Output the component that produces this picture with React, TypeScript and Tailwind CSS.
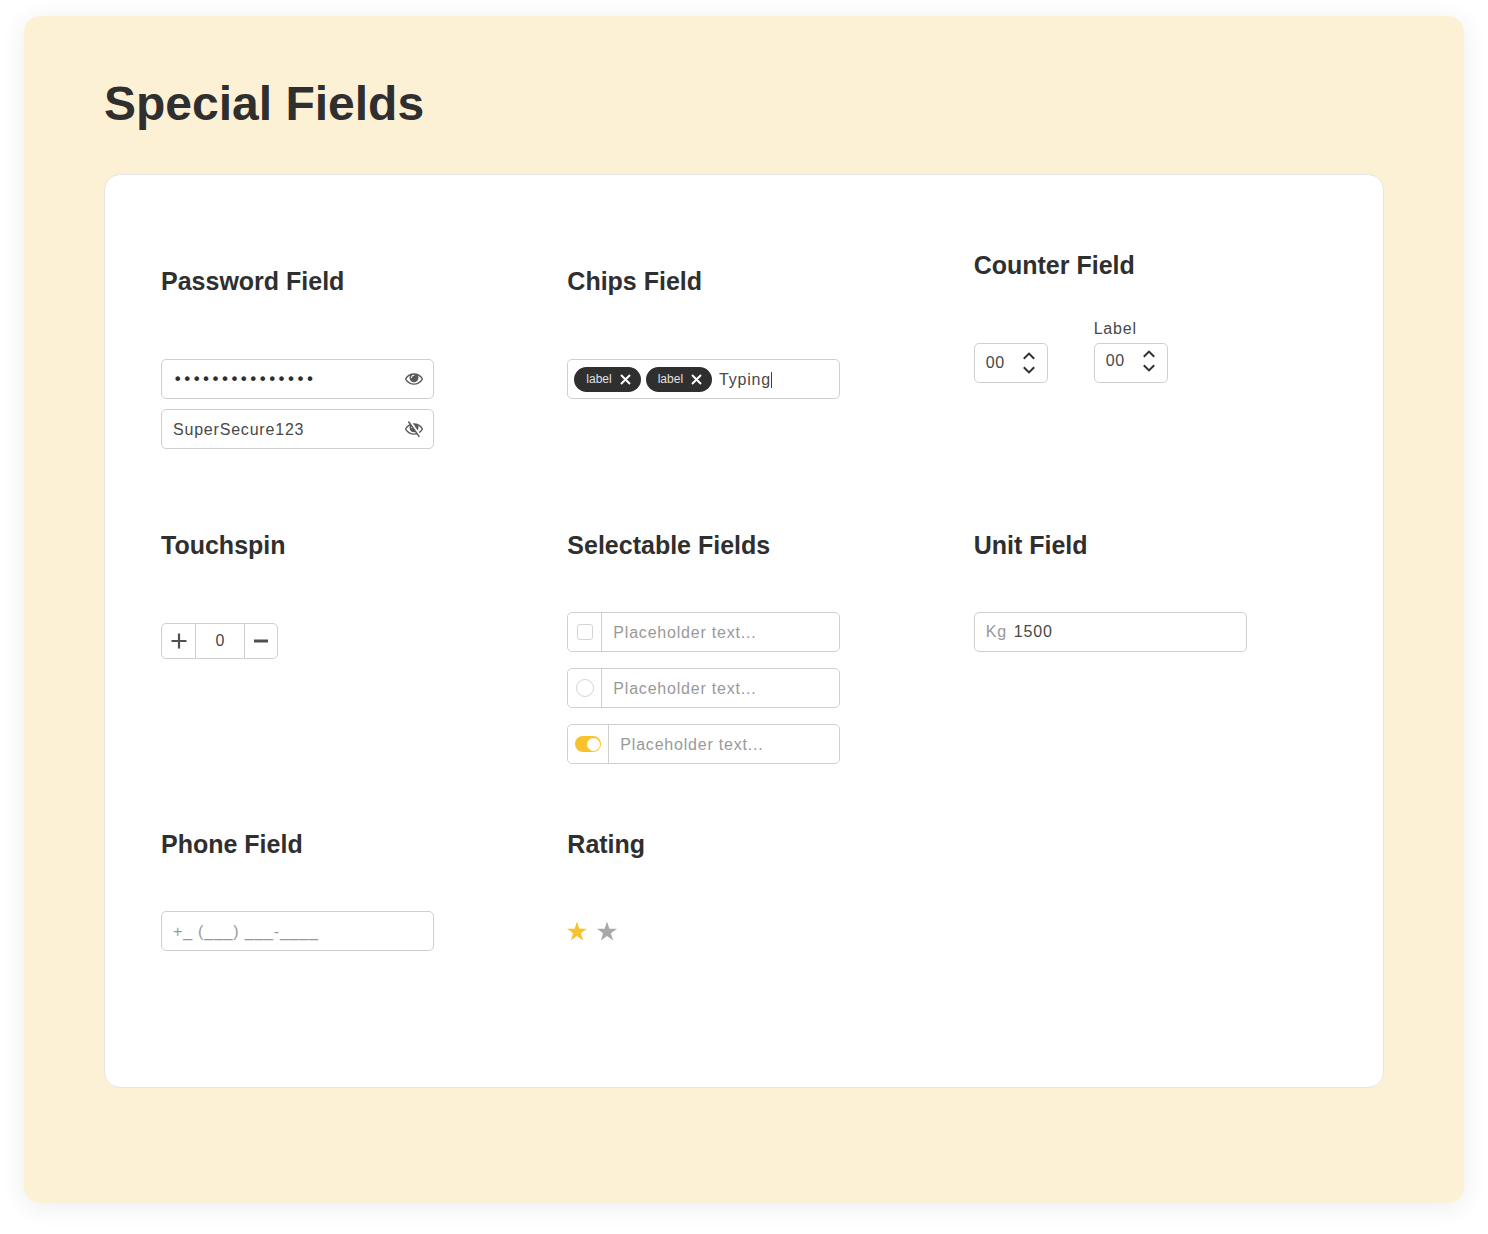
import { useState, type ReactNode } from 'react';
import { clsx } from 'clsx';

const FIELD = 'flex h-10 w-[273px] items-center rounded-[5px] border border-[#cfcfcf] bg-white';
const INPUT = 'w-full min-w-0 flex-1 bg-transparent tracking-wider text-[#484848] outline-none placeholder:text-[#999]';

const EYE_PATH =
  'M1664 960q-152-236-381-353 61 104 61 225 0 185-131.500 316.500t-316.500 131.500-316.500-131.500-131.500-316.500q0-121 61-225-229 117-381 353 133 205 333.500 326.500t434.500 121.500 434.500-121.500 333.500-326.500zM944 576q0-20-14-34t-34-14q-125 0-214.500 89.500t-89.500 214.500q0 20 14 34t34 14 34-14 14-34q0-86 61-147t147-61q20 0 34-14t14-34zM1792 960q0 34-20 69-140 230-376.500 368.500t-499.500 138.500-499.500-139-376.500-368q-20-35-20-69t20-69q140-229 376.500-368t499.500-139 499.500 139 376.500 368q20 35 20 69z';

function EyeIcon({ off }: { off?: boolean }) {
  return (
    <svg viewBox="0 0 1792 1920" className="block h-5 w-[18px]" fill="#5a5a5a">
      <path d={EYE_PATH} />
      {off && (
        <>
          <path d="M470 190L1560 1720" stroke="#fff" strokeWidth="230" />
          <path d="M340 210L1430 1740" stroke="#5a5a5a" strokeWidth="150" />
        </>
      )}
    </svg>
  );
}

function Section({ title, spacious, children }: { title: string; spacious?: boolean; children: ReactNode }) {
  return (
    <section>
      <h2 className="text-[25px] leading-8 font-bold text-[#2f2f2f]">{title}</h2>
      <div className={spacious ? 'mt-[62px]' : 'mt-[51px]'}>{children}</div>
    </section>
  );
}

function PasswordField({ initial, label, visible }: { initial: string; label: string; visible?: boolean }) {
  const [value, setValue] = useState(initial);
  const [shown, setShown] = useState(!!visible);

  return (
    <div className={clsx(FIELD, 'pr-[10px] pl-[11px]')}>
      <input
        type={shown ? 'text' : 'password'}
        aria-label={label}
        value={value}
        onChange={(e) => setValue(e.target.value)}
        className={clsx(INPUT, 'pt-0.5', !shown && 'font-["DejaVu_Sans",sans-serif] tracking-normal! text-[#2f2f2f]!')}
      />
      <button type="button" aria-label={shown ? 'Hide password' : 'Show password'} onClick={() => setShown(!shown)}>
        <EyeIcon off={shown} />
      </button>
    </div>
  );
}

function ChipsField() {
  const [chips, setChips] = useState(['label', 'label']);
  const [text, setText] = useState('Typing');

  return (
    <div className={clsx(FIELD, 'gap-[5px] px-[6px]')}>
      {chips.map((chip, i) => (
        <span key={i} className="flex h-[25px] items-center gap-2 rounded-full bg-[#2f2f2f] pr-[10px] pl-3 text-xs text-[#e0e0e0]">
          {chip}
          <button type="button" aria-label={`Remove ${chip}`} onClick={() => setChips(chips.filter((_, n) => n !== i))}>
            <svg viewBox="0 0 11 11" className="block size-[11px]" fill="none" stroke="#fff" strokeWidth="2">
              <path d="M1 1l9 9M10 1l-9 9" />
            </svg>
          </button>
        </span>
      ))}
      <div className="flex items-center pt-0.5 pl-0.5">
        <input
          aria-label="Add chip"
          value={text}
          onChange={(e) => setText(e.target.value)}
          className="[field-sizing:content] bg-transparent tracking-wider text-[#484848] caret-transparent outline-none"
        />
        <span className="h-4 w-px bg-[#3d3d3d]" />
      </div>
    </div>
  );
}

function Counter({ label }: { label?: string }) {
  const [value, setValue] = useState(0);
  const id = label ? 'counter-labelled' : 'counter-plain';

  return (
    <div className="flex flex-col gap-[2px]">
      {label && (
        <label htmlFor={id} className="leading-6 tracking-wider text-[#484848]">
          {label}
        </label>
      )}
      <div className={clsx('flex h-10 w-[74px] items-center rounded-[5px] border border-[#cfcfcf] pr-3 pl-[11px]', label && 'pb-1')}>
        <input
          id={id}
          aria-label={label ? undefined : 'Counter'}
          inputMode="numeric"
          value={String(value).padStart(2, '0')}
          onChange={(e) => setValue(Number(e.target.value) || 0)}
          className={INPUT}
        />
        <div className="flex flex-col gap-[6px]">
          <button type="button" aria-label="Increase" onClick={() => setValue(value + 1)}>
            <svg viewBox="0 0 12 8" className="block h-2 w-3" fill="none" stroke="#2f2f2f" strokeWidth="2">
              <path d="M.8 6.8L6 1.6l5.200 5.200" />
            </svg>
          </button>
          <button type="button" aria-label="Decrease" onClick={() => setValue(Math.max(0, value - 1))}>
            <svg viewBox="0 0 12 8" className="block h-2 w-3" fill="none" stroke="#2f2f2f" strokeWidth="2">
              <path d="M.8 1.200L6 6.400l5.200-5.200" />
            </svg>
          </button>
        </div>
      </div>
    </div>
  );
}

function Touchspin() {
  const [value, setValue] = useState(0);

  return (
    <div className="flex h-9 w-[117px] rounded-[5px] border border-[#cfcfcf]">
      <button type="button" aria-label="Increase" onClick={() => setValue(value + 1)} className="flex w-[33px] items-center justify-center">
        <svg viewBox="0 0 16 16" className="size-4" stroke="#505050" strokeWidth="2.2">
          <path d="M8 .5v15M.5 8h15" />
        </svg>
      </button>
      <input
        aria-label="Amount"
        value={value}
        onChange={(e) => setValue(Number(e.target.value) || 0)}
        className="min-w-0 flex-1 border-x border-[#cfcfcf] text-center text-[#484848] outline-none"
      />
      <button type="button" aria-label="Decrease" onClick={() => setValue(value - 1)} className="flex w-8 items-center justify-center">
        <svg viewBox="0 0 16 16" className="size-4" stroke="#505050" strokeWidth="3">
          <path d="M1 8h14" />
        </svg>
      </button>
    </div>
  );
}

function SelectableField({ kind }: { kind: 'checkbox' | 'radio' | 'switch' }) {
  return (
    <div className={FIELD}>
      <div className={clsx('flex h-full items-center justify-center border-r border-[#cfcfcf]', kind === 'switch' ? 'w-[41px]' : 'w-[34px]')}>
        {kind === 'checkbox' && (
          <input type="checkbox" aria-label="Select field" className="size-4 appearance-none rounded-[3px] border border-[#d4d4d4] checked:bg-[#f7c22b]" />
        )}
        {kind === 'radio' && (
          <input type="radio" aria-label="Choose field" className="size-[18px] appearance-none rounded-full border border-[#d4d4d4] checked:bg-[#f7c22b]" />
        )}
        {kind === 'switch' && (
          <label className="flex h-4 w-[26px] items-center rounded-full bg-[#cfcfcf] px-px has-checked:justify-end has-checked:bg-[#f7c22b]">
            <input type="checkbox" role="switch" aria-label="Toggle field" defaultChecked className="size-[13px] appearance-none rounded-full bg-white" />
          </label>
        )}
      </div>
      <input aria-label={`Text with ${kind}`} placeholder="Placeholder text..." className={clsx(INPUT, 'px-[11px] pt-0.5')} />
    </div>
  );
}

function Rating() {
  const [rating, setRating] = useState(1);

  return (
    <div className="flex h-10 items-center gap-[10px]">
      {[1, 2].map((n) => (
        <button key={n} type="button" aria-label={`Rate ${n}`} onClick={() => setRating(n)}>
          <svg viewBox="0 0 20 19" className="block h-5 w-5" fill={n <= rating ? '#f7c22b' : '#a8a8a8'}>
            <path d="M10 0l2.360 7.260H20l-6.180 4.490 2.360 7.250L10 14.520 3.820 19l2.360-7.250L0 7.260h7.640z" />
          </svg>
        </button>
      ))}
    </div>
  );
}

export default function App() {
  return (
    <main className='bg-white px-6 pt-4 pb-[31px] font-["Liberation_Sans",Arial,sans-serif]'>
      <div className="rounded-2xl bg-[#fdf1d5] px-20 pt-[60px] pb-[115px] shadow-[0_4px_24px_rgba(30,50,70,0.09)]">
        <h1 className="text-5xl leading-14 font-bold text-[#2f2f2f]">Special Fields</h1>

        <div className="mt-[42px] grid grid-cols-3 gap-x-[53px] gap-y-16 rounded-2xl border border-[#e6e6e6] bg-white px-14 pt-[90px] pb-[136px]">
          <div className="pb-4">
            <Section title="Password Field" spacious>
              <div className="flex flex-col gap-[10px]">
                <PasswordField label="Hidden password" initial="SuperSecure1234" />
                <PasswordField label="Visible password" initial="SuperSecure123" visible />
              </div>
            </Section>
          </div>
          <Section title="Chips Field" spacious>
            <ChipsField />
          </Section>
          <section className="-mt-4">
            <h2 className="text-[25px] leading-8 font-bold text-[#2f2f2f]">Counter Field</h2>
            <div className="mt-9 flex items-end gap-[46px]">
              <Counter />
              <Counter label="Label" />
            </div>
          </section>

          <Section title="Touchspin" spacious>
            <Touchspin />
          </Section>
          <Section title="Selectable Fields">
            <div className="flex flex-col gap-4">
              <SelectableField kind="checkbox" />
              <SelectableField kind="radio" />
              <SelectableField kind="switch" />
            </div>
          </Section>
          <Section title="Unit Field">
            <div className={clsx(FIELD, 'gap-[7px] px-[11px]')}>
              <label htmlFor="weight" className="tracking-wider text-[#999]">
                Kg
              </label>
              <input id="weight" defaultValue="1500" className={INPUT} />
            </div>
          </Section>

          <Section title="Phone Field">
            <div className={clsx(FIELD, 'px-[11px]')}>
              <input type="tel" aria-label="Phone" placeholder="+_ (___) ___-____" className={clsx(INPUT, 'pt-0.5')} />
            </div>
          </Section>
          <Section title="Rating">
            <Rating />
          </Section>
        </div>
      </div>
    </main>
  );
}
